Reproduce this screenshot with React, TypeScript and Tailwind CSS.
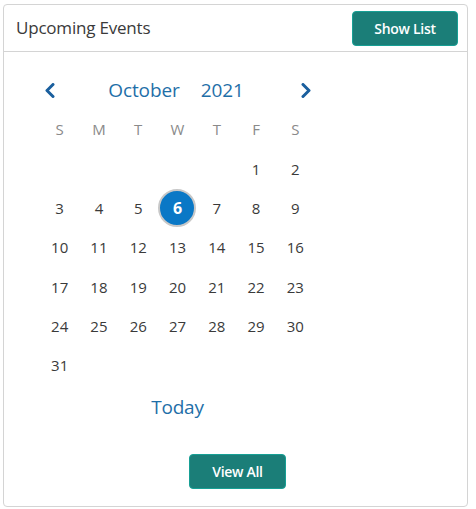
import React from "react";

const days: (number | null)[] = [
  null, null, null, null, null, 1, 2,
  3, 4, 5, 6, 7, 8, 9,
  10, 11, 12, 13, 14, 15, 16,
  17, 18, 19, 20, 21, 22, 23,
  24, 25, 26, 27, 28, 29, 30,
  31, null, null, null, null, null, null,
];

const weekdays = ["S", "M", "T", "W", "T", "F", "S"];

export default function App() {
  return (
    <div className="w-[476px] h-[509px] bg-white pl-[3px] pt-[4px]" style={{ fontFamily: '"Open Sans", "Noto Sans", sans-serif' }}>
      <div className="w-[465px] h-[503px] border border-[#d4d4d4] rounded-[4px] flex flex-col">
        <div className="h-[47px] border-b border-[#d4d4d4] flex items-center justify-between pl-[12px] pr-[9px]">
          <span className="text-[17px] text-[#3a3a3a] tracking-[-0.2px]">Upcoming Events</span>
          <button className="w-[106px] h-[35px] rounded-[4px] bg-[#1b7e78] border border-[#17a095] text-white text-[14px] font-semibold tracking-[-0.3px]">
            Show List
          </button>
        </div>
        <div className="pl-[36px] pt-[19px]">
          <div className="w-[275px] h-[39px] flex items-center justify-between">
            <button className="w-[24px] h-[24px] ml-[-2px] flex items-center justify-center text-[#1a5f9e]">
              <svg width="12" height="15" viewBox="0 0 12 15" fill="none">
                <path d="M9 1.5 L3 7.5 L9 13.5" stroke="currentColor" strokeWidth="3" strokeLinecap="round" strokeLinejoin="round" />
              </svg>
            </button>
            <div className="flex gap-[21px] text-[19px] text-[#1f6fa8] tracking-[-0.1px] ml-[-4px]">
              <span>October</span>
              <span>2021</span>
            </div>
            <button className="w-[24px] h-[24px] mr-[-3px] flex items-center justify-center text-[#1a5f9e]">
              <svg width="12" height="15" viewBox="0 0 12 15" fill="none">
                <path d="M3 1.5 L9 7.5 L3 13.5" stroke="currentColor" strokeWidth="3" strokeLinecap="round" strokeLinejoin="round" />
              </svg>
            </button>
          </div>
          <div className="w-[275px] grid grid-cols-7">
            {weekdays.map((w, i) => (
              <div key={i} className="h-[39.3px] flex items-center justify-center text-[15px] text-[#8a8a8a]">
                {w}
              </div>
            ))}
            {days.map((d, i) => (
              <div key={i} className="h-[39.3px] flex items-center justify-center text-[15px] text-[#3a3a3a]">
                {d === 6 ? (
                  <span className="w-[38px] h-[38px] rounded-full bg-[#0a78c6] border-2 border-[#c8c8c8] text-white font-bold flex items-center justify-center text-[16px]">
                    6
                  </span>
                ) : (
                  d
                )}
              </div>
            ))}
          </div>
          <div className="w-[275px] flex justify-center mt-[8px]">
            <span className="text-[19px] text-[#1f6fa8] tracking-[-0.2px]">Today</span>
          </div>
        </div>
        <div className="flex justify-center mt-[32px] pl-[4px]">
          <button className="w-[97px] h-[35px] rounded-[4px] bg-[#1b7e78] border border-[#17a095] text-white text-[14px] font-semibold tracking-[-0.3px]">
            View All
          </button>
        </div>
      </div>
    </div>
  );
}
